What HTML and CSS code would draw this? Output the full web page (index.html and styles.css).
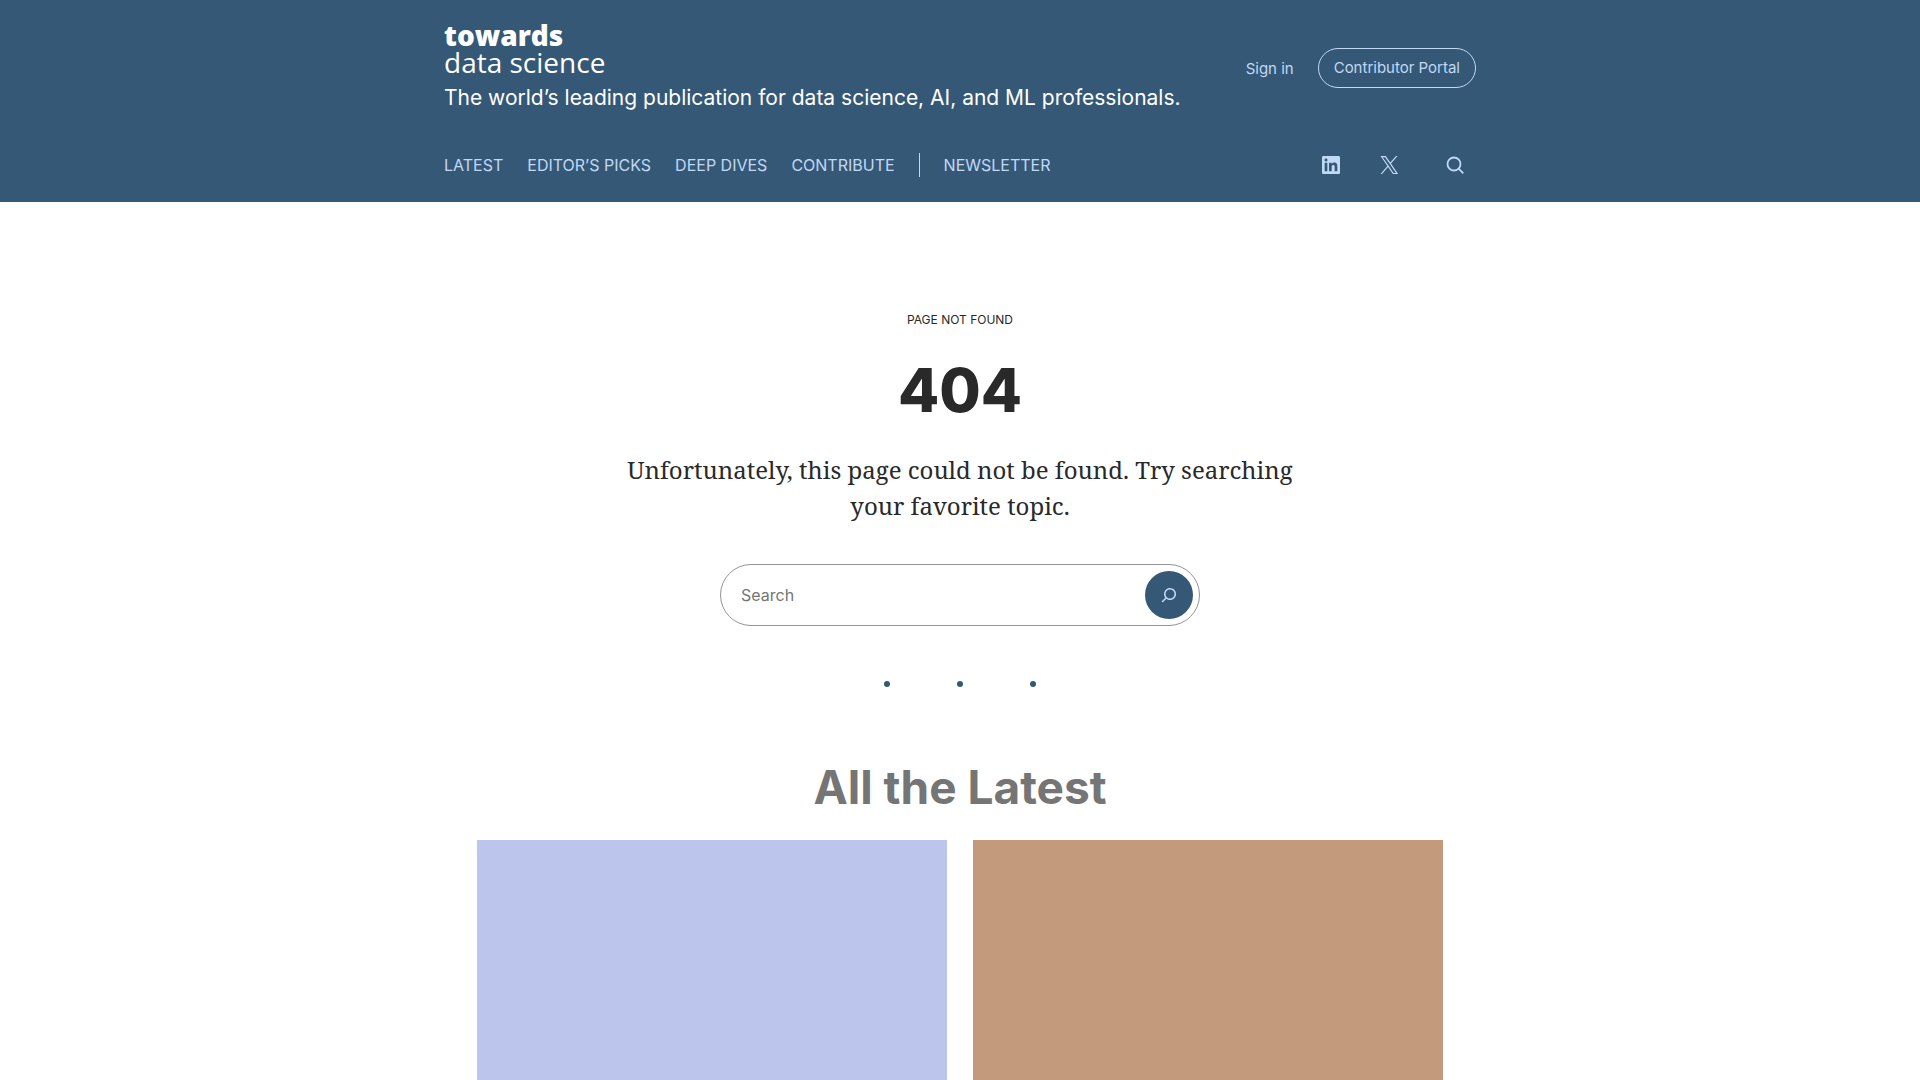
FILE: index.html
```html
<!DOCTYPE html>
<html lang="en">
<head>
<meta charset="utf-8">
<meta name="viewport" content="width=device-width, initial-scale=1">
<title>Page not found | Towards Data Science</title>
<link rel="stylesheet" href="styles.css">
</head>
<body>
<header class="site-header">
  <div class="header-inner">
    <div class="header-top">
      <div class="brand">
        <a class="logo" href="#"><span class="logo-bold">towards</span><span class="logo-light">data science</span></a>
        <p class="tagline">The world’s leading publication for data science, AI, and ML professionals.</p>
      </div>
      <div class="account">
        <a class="sign-in" href="#">Sign in</a>
        <a class="portal" href="#">Contributor Portal</a>
      </div>
    </div>
    <div class="header-bottom">
      <nav class="main-nav" aria-label="Primary">
        <a href="#">LATEST</a>
        <a href="#">EDITOR’S PICKS</a>
        <a href="#">DEEP DIVES</a>
        <a href="#">CONTRIBUTE</a>
        <a class="newsletter" href="#">NEWSLETTER</a>
      </nav>
      <div class="social">
        <a href="#" aria-label="LinkedIn"><svg class="icon" viewBox="0 0 24 24"><path d="M19.7,3H4.3C3.582,3,3,3.582,3,4.3v15.4C3,20.418,3.582,21,4.3,21h15.4c0.718,0,1.3-0.582,1.3-1.3V4.3 C21,3.582,20.418,3,19.7,3z M8.339,18.338H5.667v-8.59h2.672V18.338z M7.004,8.574c-0.857,0-1.549-0.694-1.549-1.548 c0-0.855,0.691-1.548,1.549-1.548c0.854,0,1.547,0.694,1.547,1.548C8.551,7.881,7.858,8.574,7.004,8.574z M18.339,18.338h-2.669 v-4.177c0-0.996-0.017-2.278-1.387-2.278c-1.389,0-1.601,1.086-1.601,2.206v4.249h-2.667v-8.59h2.559v1.174h0.037 c0.356-0.675,1.227-1.387,2.526-1.387c2.703,0,3.203,1.779,3.203,4.092V18.338z"/></svg></a>
        <a href="#" aria-label="X"><svg class="icon" viewBox="0 0 24 24"><path d="M13.982 10.622 20.54 3h-1.554l-5.693 6.618L8.745 3H3.5l6.876 10.007L3.5 21h1.554l6.012-6.989L15.868 21h5.245l-7.131-10.378Zm-2.128 2.474-.697-.997-5.543-7.93H8l4.474 6.4.697.996 5.815 8.318h-2.387l-4.745-6.787Z"/></svg></a>
        <button class="search-toggle" type="button" aria-label="Open search"><svg class="icon icon-line" viewBox="0 0 24 24"><circle cx="11" cy="11" r="6.5"/><path d="M15.7 15.7 20.3 20.3"/></svg></button>
      </div>
    </div>
  </div>
</header>
<main>
  <section class="not-found">
    <p class="eyebrow">PAGE NOT FOUND</p>
    <h1 class="code">404</h1>
    <p class="message">Unfortunately, this page could not be found. Try searching your favorite topic.</p>
    <form class="search" role="search">
      <input class="search-input" type="search" placeholder="Search" aria-label="Search">
      <button class="search-button" type="submit" aria-label="Search"><svg class="icon" viewBox="0 0 24 24"><path d="M13 5c-3.3 0-6 2.7-6 6 0 1.4.5 2.7 1.3 3.7l-3.8 3.8 1.1 1.1 3.8-3.8c1 .8 2.3 1.3 3.7 1.3 3.3 0 6-2.7 6-6S16.3 5 13 5zm0 10.5c-2.5 0-4.5-2-4.5-4.5s2-4.5 4.5-4.5 4.5 2 4.5 4.5-2 4.5-4.5 4.5z"/></svg></button>
    </form>
    <div class="dots" role="separator"><span></span><span></span><span></span></div>
  </section>
  <section class="latest">
    <h2 class="latest-title">All the Latest</h2>
    <div class="cards">
      <a class="card card-blue" href="#" aria-label="Latest article"></a>
      <a class="card card-tan" href="#" aria-label="Latest article"></a>
    </div>
  </section>
</main>
</body>
</html>
```
FILE: styles.css
```css
* { box-sizing: border-box; }
body {
  margin: 0;
  background: #fff;
  color: #292929;
  font-family: Inter, "Noto Sans", sans-serif;
  font-size: 16px;
}
h1, h2, p { margin: 0; }
a { color: inherit; text-decoration: none; }
button { border: 0; padding: 0; background: none; color: inherit; cursor: pointer; }
.icon { display: block; width: 24px; height: 24px; fill: currentColor; }
.icon-line { fill: none; stroke: currentColor; stroke-width: 1.8; }

.site-header { background: #355876; color: #c0d9f5; }
.header-inner {
  max-width: 1080px;
  margin: 0 auto;
  padding: 22px 24px 25px;
}
.header-top { display: flex; justify-content: space-between; }
.logo {
  display: flex;
  flex-direction: column;
  color: #fff;
  font-family: "Open Sans", sans-serif;
  font-size: 28px;
  line-height: 27px;
}
.logo-bold { font-weight: 800; }
.logo-light { font-weight: 400; }
.tagline { margin-top: 7px; color: #fff; font-size: 21px; line-height: 30px; }
.account { display: flex; align-items: center; align-self: flex-start; gap: 24px; margin-top: 26px; font-size: 15px; }
.portal { padding: 0 15px; border: 1px solid; border-radius: 20px; line-height: 38px; }
.header-bottom { display: flex; align-items: center; justify-content: space-between; margin-top: 40px; }
.main-nav { display: flex; gap: 24px; font-size: 16px; line-height: 24px; }
.newsletter { padding-left: 24px; border-left: 1px solid; }
.social { display: flex; gap: 34px; padding-right: 9px; }
.social .search-toggle { margin-left: 8px; }

.not-found {
  display: flex;
  flex-direction: column;
  align-items: center;
  max-width: 728px;
  margin: 0 auto;
  padding: 108px 24px 0;
  text-align: center;
}
.eyebrow { font-size: 12px; line-height: 20px; }
.code { margin-top: 24px; font-size: 60px; font-weight: 800; line-height: 72px; }
.message { margin-top: 26px; font-family: "Noto Serif", "Liberation Serif", serif; font-size: 24px; line-height: 36px; }
.search {
  display: flex;
  align-items: center;
  width: 100%;
  max-width: 480px;
  margin-top: 40px;
  padding: 6px;
  border: 1px solid #949494;
  border-radius: 31px;
}
.search-input {
  flex: 1;
  min-width: 0;
  padding: 0 14px;
  border: 0;
  outline: 0;
  background: none;
  font: inherit;
}
.search-input::placeholder { color: #757575; }
.search-button {
  display: grid;
  place-items: center;
  width: 48px;
  height: 48px;
  border-radius: 50%;
  background: #355876;
  color: #c0d9f5;
}
.dots { display: flex; gap: 67px; margin-top: 55px; }
.dots span { width: 6px; height: 6px; border-radius: 50%; background: #355876; }

.latest { max-width: 1014px; margin: 0 auto; padding: 74px 24px 0; }
.latest-title { color: #757575; font-size: 46px; font-weight: 700; line-height: 52px; text-align: center; }
.cards { display: grid; grid-template-columns: 1fr 1fr; gap: 26px; margin-top: 27px; }
.card { aspect-ratio: 16 / 9; }
.card-blue { background: #bcc5ec; }
.card-tan { background: #c49a7c; }
```
